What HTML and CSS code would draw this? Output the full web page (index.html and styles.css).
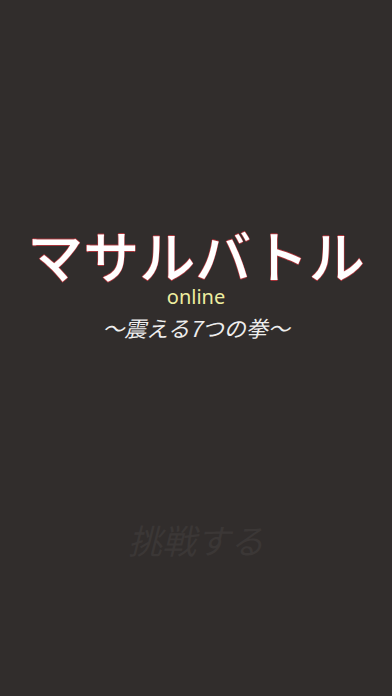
FILE: index.html
```html
<!DOCTYPE html>
<html lang="ja">
<head>
<meta charset="utf-8">
<link rel="stylesheet" href="styles.css">
</head>
<body>
<main class="screen">
  <div class="title-block">
    <h1 class="title">マサルバトル</h1>
    <div class="online">online</div>
    <div class="subtitle">〜震える7つの拳〜</div>
  </div>
  <div class="start">挑戦する</div>
</main>
</body>
</html>
```
FILE: styles.css
```css
html, body {
  margin: 0;
  padding: 0;
  background: #312d2c;
}
.screen {
  width: 392px;
  height: 696px;
  display: flex;
  flex-direction: column;
  align-items: center;
  font-family: "Noto Sans CJK JP", "Noto Sans", sans-serif;
}
.title-block {
  margin-top: 226px;
  display: flex;
  flex-direction: column;
  align-items: center;
}
.title {
  margin: 0;
  font-size: 56px;
  font-weight: 500;
  line-height: 56px;
  color: #ffffff;
  text-shadow: 0.6px 0 0 #a8343a, -0.6px 0 0 #a8343a, 0 0.6px 0 #a8343a, 0 -0.6px 0 #a8343a;
}
.online {
  font-family: "Noto Sans", "Open Sans", sans-serif;
  font-size: 20px;
  line-height: 22px;
  margin-top: 4px;
  color: #eeeea0;
}
.subtitle {
  font-size: 22px;
  line-height: 30px;
  font-style: italic;
  color: #eeeeee;
  margin-top: 4px;
}
.start {
  margin-top: 176px;
  font-size: 34px;
  line-height: 44px;
  font-style: italic;
  font-weight: 400;
  color: #3b3736;
}
```
